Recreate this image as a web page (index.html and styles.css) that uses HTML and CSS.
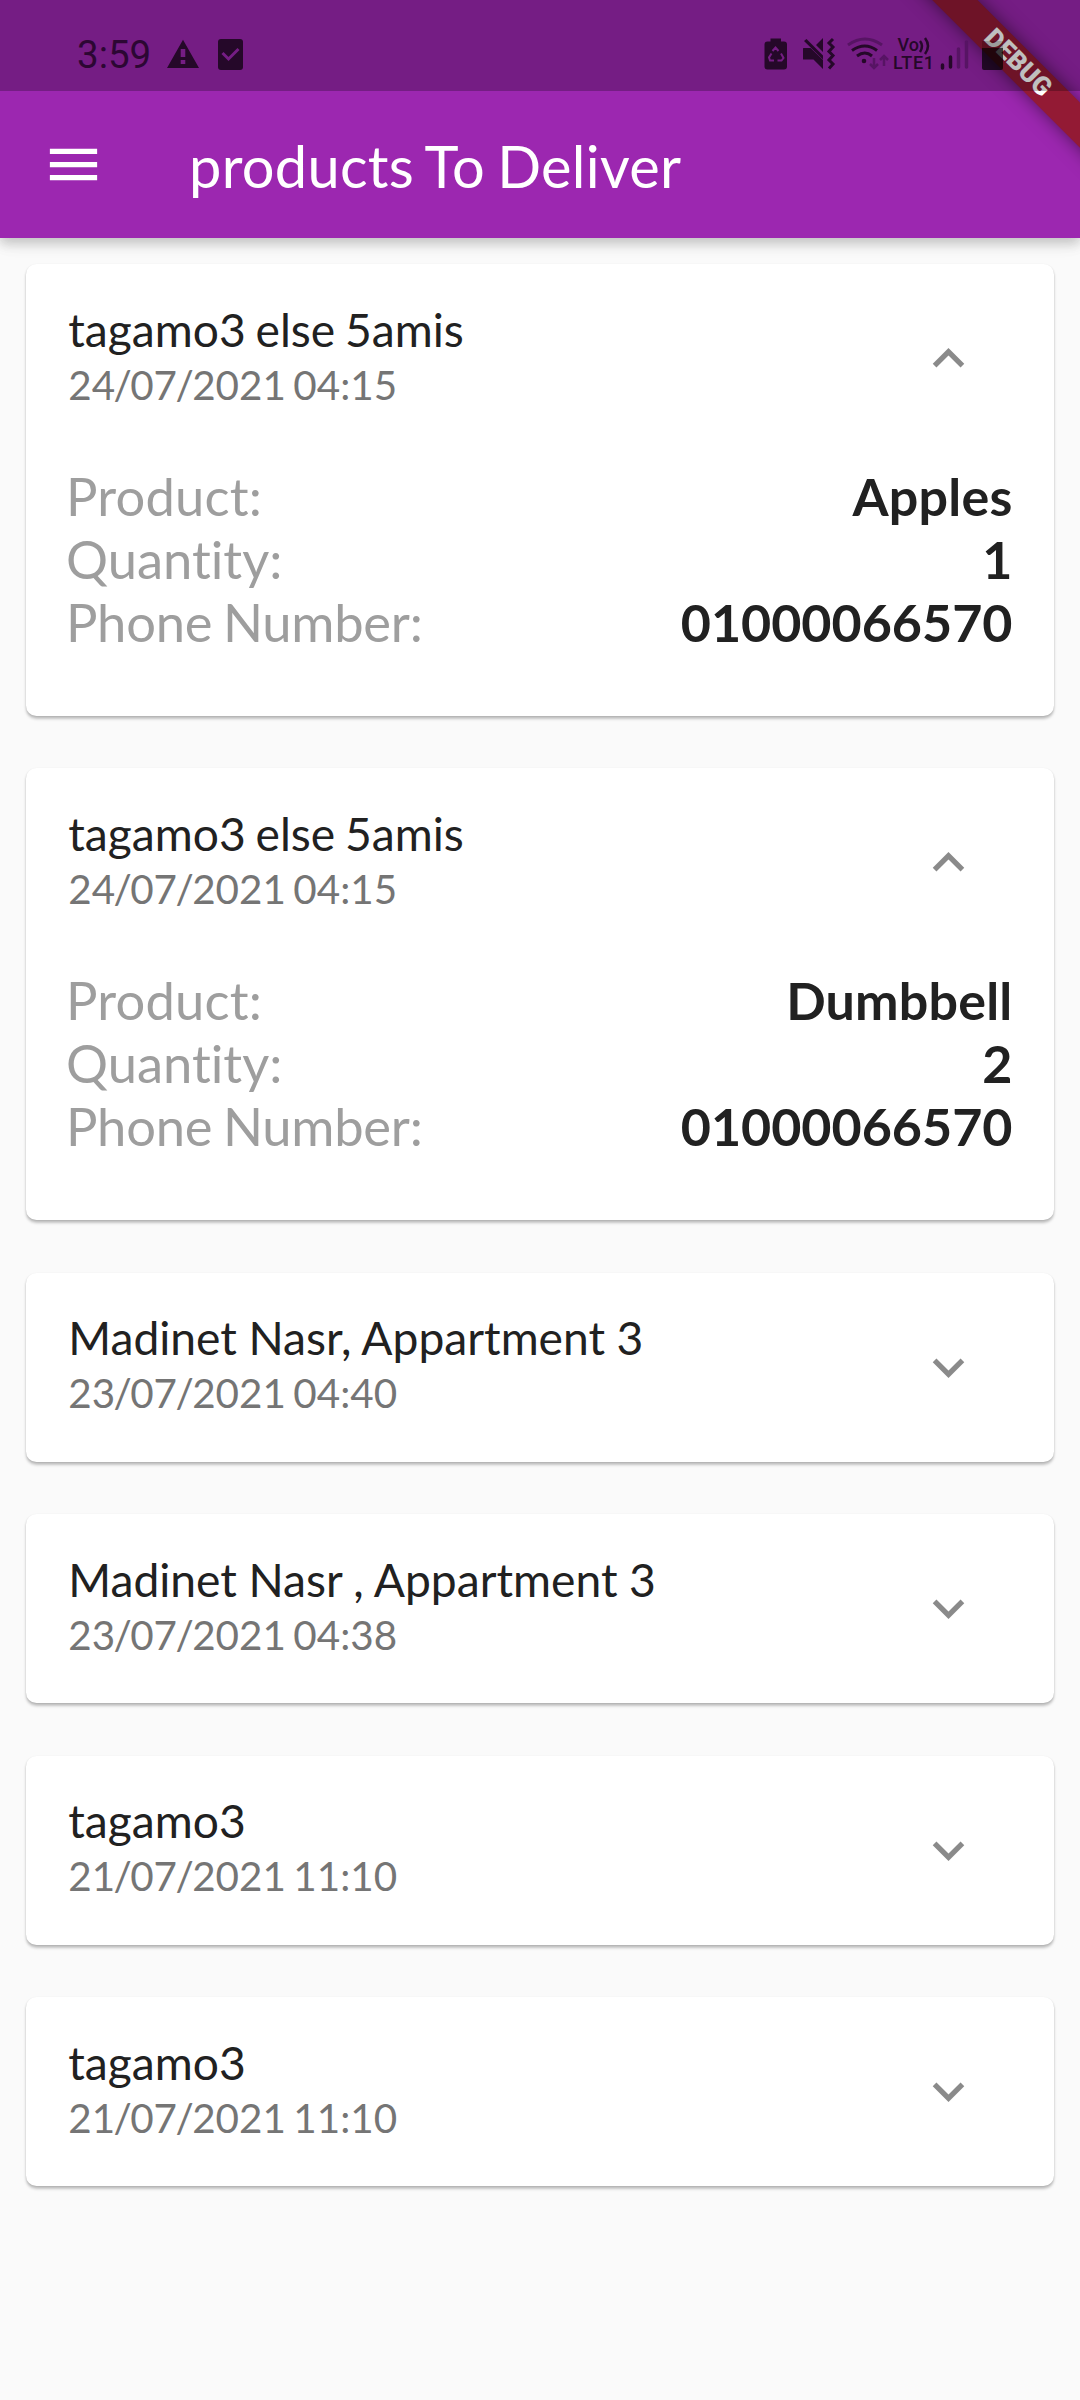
FILE: index.html
```
<!DOCTYPE html>
<html lang="en">
<head>
<meta charset="utf-8">
<title>products To Deliver</title>
<link rel="stylesheet" href="styles.css">
</head>
<body>
<header class="top">
  <div class="status">
    <span class="clock">3:59</span>
    <svg class="warn" width="34" height="30" viewBox="0 0 34 30"><path fill-rule="evenodd" d="M17 0.800 33 29H1zM14.700 10v8h4.600v-8zM14.700 21v4h4.600v-4z"/></svg>
    <svg class="check" width="26" height="32" viewBox="0 0 26 32"><rect x="1" y="1" width="25" height="31" rx="3"/><path class="check-mark" d="M5.500 15l6 6L21.500 11"/></svg>
    <svg class="system" width="260" height="36" viewBox="760 34 260 36">
      <path fill-rule="evenodd" d="M770.500 38.500h10.500v3h3q3 0 3 3v22q0 3-3 3h-16.500q-3 0-3-3v-22q0-3 3-3h3z"/>
      <g class="recycle"><path d="M772.500 51l3-3.500 3 3.500M781 53.500l2.500 4.500-2 2.500h-4M774 60.500h-4l-1-3 2.500-4"/></g>
      <path d="M803.500 48h7l12.500 12v9l-9.500-9.500h-10q-.5 0-.5-.5V48.500zM816 45l7-7v14zM804 41l2.500-2 16.500 16.500v4z"/>
      <path class="line" d="M833 39l-4 4 4 4-4 4.500 4 4-4 4.500 4 4-4 4.500"/>
      <g class="line"><path class="dim" d="M848 45q17-12 34 0"/><path d="M852 50.500q13-9 25 0M857 56q8-6 15 0"/></g>
      <circle cx="864" cy="61" r="2.300"/>
      <path class="line dim thin" d="M874 58v10m-4-4l4 4 4-4M884 66V56m-4 4l4-4 4 4"/>
      <text class="vo" x="897.500" y="51">Vo</text>
      <path class="line thin" d="M920 41q4 5 0 11M925 38q6 8 0 16"/>
      <text class="lte" x="893" y="69" textLength="41">LTE1</text>
      <path class="line bars" d="M942.500 65v3M950.500 57v10"/><path class="line bars dim" d="M958.500 49v18M966.500 42v25"/>
      <rect class="battery-dim" x="982" y="41" width="21" height="7"/><path class="battery" d="M982 48h21v20q0 2-2 2h-17q-2 0-2-2z"/>
    </svg>
  </div>
  <div class="bar">
    <svg class="menu" width="63" height="63" viewBox="0 0 24 24"><path d="M3 18h18v-2H3v2zm0-5h18v-2H3v2zm0-7v2h18V6H3z"/></svg>
    <h1 class="title">products To Deliver</h1>
  </div>
  <div class="corner"><div class="ribbon">DEBUG</div></div>
</header>
<main class="list">
  <section class="card">
    <div class="tile"><div class="text"><p class="name wide">tagamo3 else 5amis</p><p class="date">24<span class="slash">/</span>07<span class="slash">/</span>2021 04:15</p></div><svg class="chevron open" viewBox="0 0 24 24"><path d="M16.590 8.590 12 13.170 7.410 8.590 6 10l6 6 6-6z"/></svg></div>
    <dl class="details"><div class="row"><dt class="product">Product:</dt><dd class="word">Apples</dd></div><div class="row"><dt>Quantity:</dt><dd>1</dd></div><div class="row"><dt class="phone">Phone Number:</dt><dd>01000066570</dd></div></dl>
  </section>
  <section class="card">
    <div class="tile"><div class="text"><p class="name wide">tagamo3 else 5amis</p><p class="date">24<span class="slash">/</span>07<span class="slash">/</span>2021 04:15</p></div><svg class="chevron open" viewBox="0 0 24 24"><path d="M16.590 8.590 12 13.170 7.410 8.590 6 10l6 6 6-6z"/></svg></div>
    <dl class="details"><div class="row"><dt class="product">Product:</dt><dd class="word">Dumbbell</dd></div><div class="row"><dt>Quantity:</dt><dd>2</dd></div><div class="row"><dt class="phone">Phone Number:</dt><dd>01000066570</dd></div></dl>
  </section>
  <section class="card">
    <div class="tile"><div class="text"><p class="name">Madinet Nasr, Appartment 3</p><p class="date">23<span class="slash">/</span>07<span class="slash">/</span>2021 04:40</p></div><svg class="chevron" viewBox="0 0 24 24"><path d="M16.590 8.590 12 13.170 7.410 8.590 6 10l6 6 6-6z"/></svg></div>
  </section>
  <section class="card">
    <div class="tile"><div class="text"><p class="name">Madinet Nasr , Appartment 3</p><p class="date">23<span class="slash">/</span>07<span class="slash">/</span>2021 04:38</p></div><svg class="chevron" viewBox="0 0 24 24"><path d="M16.590 8.590 12 13.170 7.410 8.590 6 10l6 6 6-6z"/></svg></div>
  </section>
  <section class="card">
    <div class="tile"><div class="text"><p class="name">tagamo3</p><p class="date">21<span class="slash">/</span>07<span class="slash">/</span>2021 11:10</p></div><svg class="chevron" viewBox="0 0 24 24"><path d="M16.590 8.590 12 13.170 7.410 8.590 6 10l6 6 6-6z"/></svg></div>
  </section>
  <section class="card">
    <div class="tile"><div class="text"><p class="name">tagamo3</p><p class="date">21<span class="slash">/</span>07<span class="slash">/</span>2021 11:10</p></div><svg class="chevron" viewBox="0 0 24 24"><path d="M16.590 8.590 12 13.170 7.410 8.590 6 10l6 6 6-6z"/></svg></div>
  </section>
</main>
</body>
</html>
```
FILE: styles.css
```
* { box-sizing: border-box; }
body { margin: 0; min-height: 2400px; background: #fafafa; font-family: Lato, sans-serif; font-variant-ligatures: none; color: #212121; }
h1, p, dl, dd { margin: 0; font-weight: 400; }
.top { position: relative; background: #9c27b0; box-shadow: 0 5px 10px rgba(0,0,0,.14), 0 8px 13px rgba(0,0,0,.06), 0 3px 22px rgba(0,0,0,.06); }
.status { position: relative; z-index: 2; height: 91px; background: rgba(0,0,0,.25); display: flex; align-items: flex-start; padding: 38px 0 0 77px; fill: #250829; color: #2c0733; }
.clock { font: 400 38.500px/34px Roboto, sans-serif; width: 89px; }
.warn { margin-top: 1px; }
.check { margin-left: 17px; }
.check-mark { fill: none; stroke: #751d84; stroke-width: 3; }
.system { margin: -4px 0 0 517px; overflow: visible; font-family: Roboto, sans-serif; font-weight: 500; }
.recycle { fill: none; stroke: #751d84; stroke-width: 2; }
.line { fill: none; stroke: #250829; stroke-width: 3; }
.dim { stroke: #571464; }
.thin { stroke-width: 2.500; }
.bars { stroke-width: 3.500; stroke-linecap: round; }
.battery { fill: rgba(0,0,0,.7); }
.battery-dim { fill: rgba(0,0,0,.18); }
.vo, .lte { font-size: 18px; }
.bar { height: 147px; display: flex; align-items: center; padding-left: 42px; }
.menu { fill: #fff; }
.title { margin-left: 84px; font-size: 57.750px; line-height: 70px; letter-spacing: .3px; word-spacing: -2.900px; color: #fff; padding-top: 2px; }
.corner { position: absolute; z-index: 1; top: 0; right: 0; width: 180px; height: 180px; overflow: hidden; }
.ribbon { position: absolute; left: -27.500px; top: 46.750px; width: 290px; height: 31.500px; transform: rotate(45deg); background: #931a34; box-shadow: 0 0 18px rgba(0,0,0,.5); color: #fff; font: 900 26px/31.500px Roboto, sans-serif; text-align: center; }
.list { display: flex; flex-direction: column; gap: 52.500px; padding: 26.250px; }
.card { background: #fff; border-radius: 10.500px; box-shadow: 0 2.600px 3px rgba(0,0,0,.22), 0 1px 2px rgba(0,0,0,.1); }
.tile { height: 189px; display: flex; align-items: center; justify-content: space-between; padding: 0 73.500px 0 42px; }
.text { padding-bottom: 5px; }
.name { font-size: 46.200px; line-height: 56px; word-spacing: -.3px; }
.wide { word-spacing: -2px; }
.date { font-size: 40.400px; line-height: 55px; color: #757575; word-spacing: -2.800px; }
.slash { margin: 0 -1.600px; }
.chevron { width: 63px; height: 63px; fill: #8a8a8a; }
.open { transform: rotate(180deg); }
.details { padding: 11.500px 41.250px 0 39.750px; height: 262.650px; font-size: 52px; line-height: 63px; }
.row { display: flex; justify-content: space-between; }
dt { color: #9e9e9e; font-size: 52.500px; margin-top: -1px; }
dd { font-weight: 700; }
.product { letter-spacing: .2px; }
.phone { letter-spacing: -.25px; word-spacing: -2.500px; }
.word { letter-spacing: .2px; }
```
